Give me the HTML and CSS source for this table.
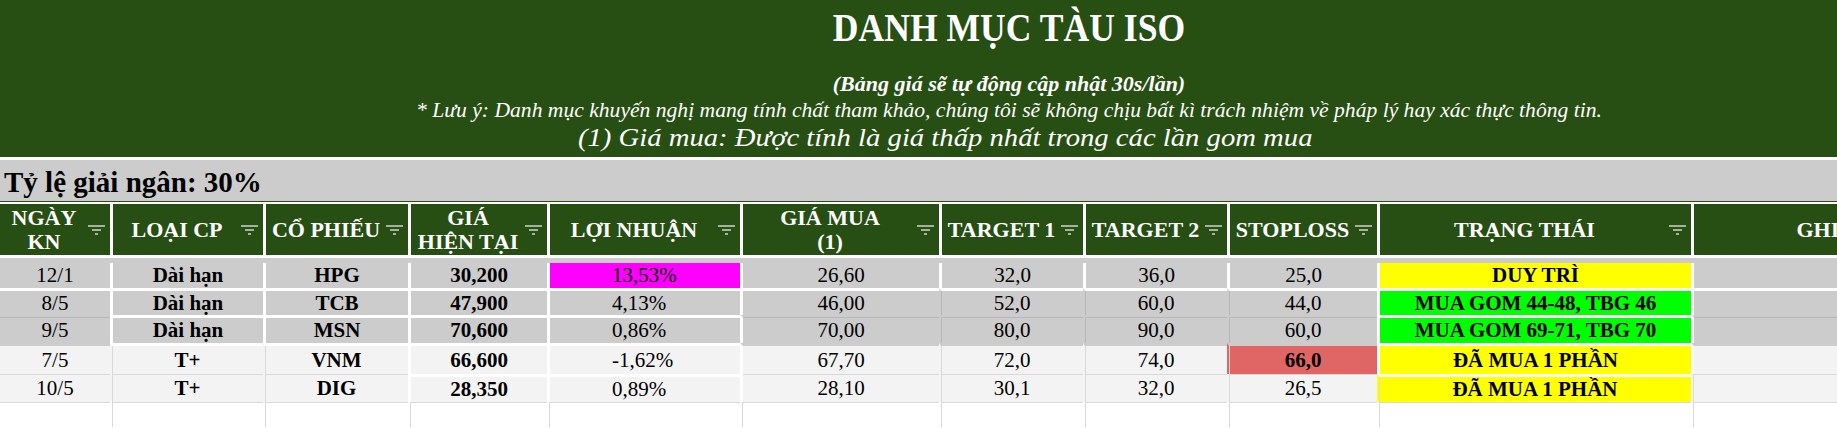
FILE: index.html
```html
<!DOCTYPE html>
<html lang="vi">
<head>
<meta charset="utf-8">
<title>Danh mục tàu ISO</title>
<link rel="stylesheet" href="styles.css">
</head>
<body>
<div class="page">
  <header class="banner">
    <h1 class="title">DANH MỤC TÀU ISO</h1>
    <p class="note note-bold">(Bảng giá sẽ tự động cập nhật 30s/lần)</p>
    <p class="note note-2">* Lưu ý: Danh mục khuyến nghị mang tính chất tham khảo, chúng tôi sẽ không chịu bất kì trách nhiệm về pháp lý hay xác thực thông tin.</p>
    <p class="note note-3">(1) Giá mua: Được tính là giá thấp nhất trong các lần gom mua</p>
  </header>

  <div class="ratio">Tỷ lệ giải ngân: 30%</div>

  <div class="sheet">
    <div class="row head">
      <div class="hc"><span class="hl">NGÀY<br>KN</span><svg class="flt" viewBox="0 0 17 10"><rect x="0" y="0" width="17" height="2"/><rect x="4" y="4" width="9" height="2"/><rect x="7" y="8" width="3" height="2"/></svg></div>
      <div class="hc wl"><span class="hl">LOẠI CP</span><svg class="flt" viewBox="0 0 17 10"><rect x="0" y="0" width="17" height="2"/><rect x="4" y="4" width="9" height="2"/><rect x="7" y="8" width="3" height="2"/></svg></div>
      <div class="hc wl"><span class="hl">CỔ PHIẾU</span><svg class="flt" viewBox="0 0 17 10"><rect x="0" y="0" width="17" height="2"/><rect x="4" y="4" width="9" height="2"/><rect x="7" y="8" width="3" height="2"/></svg></div>
      <div class="hc wl"><span class="hl">GIÁ<br>HIỆN TẠI</span><svg class="flt" viewBox="0 0 17 10"><rect x="0" y="0" width="17" height="2"/><rect x="4" y="4" width="9" height="2"/><rect x="7" y="8" width="3" height="2"/></svg></div>
      <div class="hc wl"><span class="hl">LỢI NHUẬN</span><svg class="flt" viewBox="0 0 17 10"><rect x="0" y="0" width="17" height="2"/><rect x="4" y="4" width="9" height="2"/><rect x="7" y="8" width="3" height="2"/></svg></div>
      <div class="hc wl"><span class="hl">GIÁ MUA<br>(1)</span><svg class="flt" viewBox="0 0 17 10"><rect x="0" y="0" width="17" height="2"/><rect x="4" y="4" width="9" height="2"/><rect x="7" y="8" width="3" height="2"/></svg></div>
      <div class="hc wl"><span class="hl">TARGET 1</span><svg class="flt" viewBox="0 0 17 10"><rect x="0" y="0" width="17" height="2"/><rect x="4" y="4" width="9" height="2"/><rect x="7" y="8" width="3" height="2"/></svg></div>
      <div class="hc wl"><span class="hl">TARGET 2</span><svg class="flt" viewBox="0 0 17 10"><rect x="0" y="0" width="17" height="2"/><rect x="4" y="4" width="9" height="2"/><rect x="7" y="8" width="3" height="2"/></svg></div>
      <div class="hc wl"><span class="hl">STOPLOSS</span><svg class="flt" viewBox="0 0 17 10"><rect x="0" y="0" width="17" height="2"/><rect x="4" y="4" width="9" height="2"/><rect x="7" y="8" width="3" height="2"/></svg></div>
      <div class="hc wl"><span class="hl">TRẠNG THÁI</span><svg class="flt" viewBox="0 0 17 10"><rect x="0" y="0" width="17" height="2"/><rect x="4" y="4" width="9" height="2"/><rect x="7" y="8" width="3" height="2"/></svg></div>
      <div class="hc wl"><span class="hl">GHI CHÚ</span><svg class="flt" viewBox="0 0 17 10"><rect x="0" y="0" width="17" height="2"/><rect x="4" y="4" width="9" height="2"/><rect x="7" y="8" width="3" height="2"/></svg></div>
    </div>

    <div class="strip"></div>

    <div class="row r1 gray">
      <div class="c">12/1</div>
      <div class="c wl b">Dài hạn</div>
      <div class="c wl b">HPG</div>
      <div class="c wl b">30,200</div>
      <div class="c wl pct mag">13,53%</div>
      <div class="c wl">26,60</div>
      <div class="c wl">32,0</div>
      <div class="c wl">36,0</div>
      <div class="c wl">25,0</div>
      <div class="c wl b yel">DUY TRÌ</div>
      <div class="c wl"></div>
    </div>

    <div class="row r2 gray">
      <div class="c wt">8/5</div>
      <div class="c wt wl b">Dài hạn</div>
      <div class="c wt wl b">TCB</div>
      <div class="c wt wl b">47,900</div>
      <div class="c wt wl pct">4,13%</div>
      <div class="c wt wl">46,00</div>
      <div class="c wt tl">52,0</div>
      <div class="c wt tl">60,0</div>
      <div class="c wt tl">44,0</div>
      <div class="c wt wl b grn">MUA GOM 44-48, TBG 46</div>
      <div class="c wt wl"></div>
    </div>

    <div class="row r3 gray">
      <div class="c tt">9/5</div>
      <div class="c wt wl b">Dài hạn</div>
      <div class="c wt wl b">MSN</div>
      <div class="c wt wl b">70,600</div>
      <div class="c wt wl pct">0,86%</div>
      <div class="c tt wl">70,00</div>
      <div class="c tt tl">80,0</div>
      <div class="c tt tl">90,0</div>
      <div class="c tt tl">60,0</div>
      <div class="c wt wl b grn">MUA GOM 69-71, TBG 70</div>
      <div class="c tt wl"></div>
    </div>

    <div class="row r4 light">
      <div class="c pt">7/5</div>
      <div class="c wt tl b">T+</div>
      <div class="c wt tl b">VNM</div>
      <div class="c wt wl b">66,600</div>
      <div class="c wt wl pct">-1,62%</div>
      <div class="c pt wl">67,70</div>
      <div class="c pt tl">72,0</div>
      <div class="c pt tl">74,0</div>
      <div class="c pt tl b red">66,0</div>
      <div class="c wt wl b yel">ĐÃ MUA 1 PHẦN</div>
      <div class="c pt wl"></div>
    </div>

    <div class="row r5 light">
      <div class="c t1">10/5</div>
      <div class="c t1 tl b">T+</div>
      <div class="c t1 tl b">DIG</div>
      <div class="c wt wl b">28,350</div>
      <div class="c wt wl pct">0,89%</div>
      <div class="c t1 wl">28,10</div>
      <div class="c t1 tl">30,1</div>
      <div class="c t1 tl">32,0</div>
      <div class="c t1 tl">26,5</div>
      <div class="c wt tl b yel">ĐÃ MUA 1 PHẦN</div>
      <div class="c t1 tl"></div>
    </div>

    <div class="row r6 blank">
      <div class="c t1"></div>
      <div class="c t1 tl"></div>
      <div class="c t1 tl"></div>
      <div class="c t1 tl"></div>
      <div class="c t1 tl"></div>
      <div class="c t1 tl"></div>
      <div class="c t1 tl"></div>
      <div class="c t1 tl"></div>
      <div class="c t1 tl"></div>
      <div class="c t1 tl"></div>
      <div class="c t1 tl"></div>
    </div>
  </div>
</div>
</body>
</html>
```

FILE: styles.css
```css
html, body {
  margin: 0;
  padding: 0;
  background: #ffffff;
  overflow: hidden;
}

body {
  font-family: "Liberation Serif", "Times New Roman", serif;
  color: #000000;
}

.page {
  width: 2018px;
}

/* ---------- banner ---------- */
.banner {
  height: 157px;
  box-sizing: border-box;
  padding-top: 6px;
  background: #274e13;
  color: #ffffff;
  text-align: center;
  margin-bottom: 3px;
}

.title {
  margin: 0 0 20px;
  font-size: 40px;
  line-height: 44px;
  font-weight: bold;
  transform: scaleX(0.89);
}

.note {
  margin: 0;
  font-size: 22px;
  line-height: 27px;
  font-style: italic;
  white-space: nowrap;
}

.note-bold {
  font-weight: bold;
}

.note-2 {
  font-size: 21.6px;
}

.note-3 {
  font-size: 24.5px;
  padding-right: 109px;
  transform: scaleX(1.17);
}

/* ---------- ratio band ---------- */
.ratio {
  height: 42px;
  box-sizing: border-box;
  padding: 2px 0 0 4px;
  line-height: 40px;
  font-size: 29px;
  font-weight: bold;
  background: #cccccc;
  border-bottom: 1px solid #274e13;
  margin-bottom: 2px;
}

/* ---------- sheet ---------- */
.row {
  display: grid;
  grid-template-columns: 110px 153px 145px 139px 193px 199px 144px 144px 150px 314px 327px;
}

.head {
  height: 54px;
  box-sizing: border-box;
  background: #274e13;
  border-bottom: 3px solid #ffffff;
  color: #ffffff;
}

.hc {
  display: flex;
  align-items: center;
  box-sizing: border-box;
  min-width: 0;
}

.hl {
  flex: 1;
  text-align: center;
  font-size: 22px;
  line-height: 24px;
  font-weight: bold;
  white-space: nowrap;
}

.flt {
  flex: 0 0 17px;
  width: 17px;
  height: 10px;
  margin-right: 5px;
  fill: #a6b39c;
}

.strip {
  height: 5px;
  background: #cccccc;
}

.r1 { height: 25px; }
.r2 { height: 27px; }
.r3 { height: 28px; }
.r4 { height: 31px; }
.r5 { height: 28px; }
.r6 { height: 25px; }

.gray { --bg: #cccccc; --line: #b7b7b7; }
.light { --bg: #f3f3f3; --line: #d9d9d9; }
.blank { --bg: #ffffff; --line: #d9d9d9; }

.c {
  --shl: inset 0 0 transparent;
  --sht: inset 0 0 transparent;
  display: flex;
  align-items: center;
  justify-content: center;
  box-sizing: border-box;
  min-width: 0;
  background-color: var(--bg);
  box-shadow: var(--shl), var(--sht);
  font-size: 21px;
  white-space: nowrap;
}

.b { font-weight: bold; }

.pct {
  justify-content: flex-start;
  padding-left: 62px;
}

/* borders */
.wl { border-left: 3px solid #ffffff; }
.wt { border-top: 3px solid #ffffff; }
.tl {
  border-left: 2px solid transparent;
  --shl: inset 1px 0 0 var(--line);
}
.tt {
  border-top: 2px solid transparent;
  --sht: inset 0 1px 0 var(--line);
}
.t1 {
  --sht: inset 0 1px 0 var(--line);
}
.pt { border-top: 3px solid #cccccc; }

/* fills */
.mag { background-color: #ff00ff; }
.yel { background-color: #ffff00; }
.grn { background-color: #00ff00; }
.red { background-color: #e06666; }
```
